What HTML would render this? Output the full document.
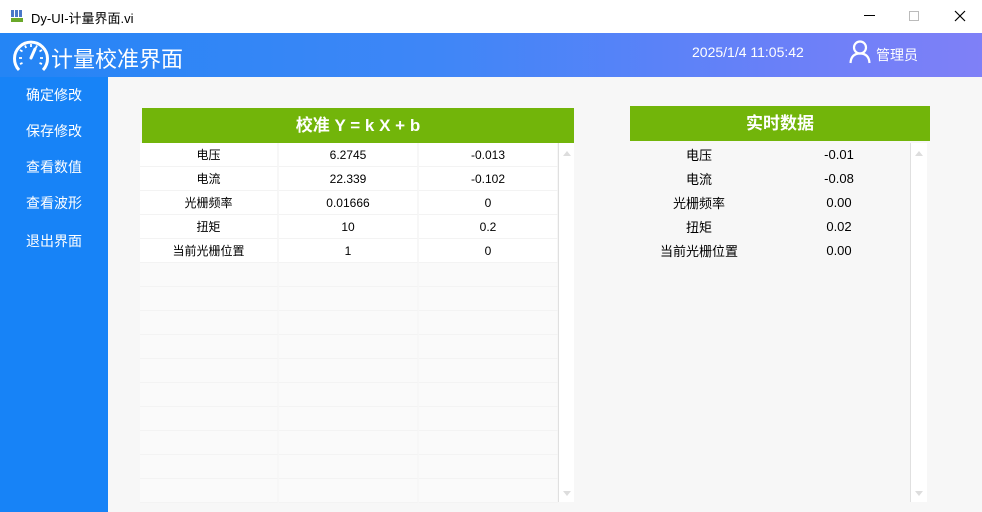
<!DOCTYPE html>
<html><head><meta charset="utf-8"><style>
*{margin:0;padding:0;box-sizing:border-box}
body{width:982px;height:512px;overflow:hidden;background:#f7f7f7;font-family:"Liberation Sans","Noto Sans CJK SC",sans-serif;position:relative}
.a{position:absolute}
.title{left:0;top:0;width:982px;height:33px;background:#fff;font-size:13px;color:#000}
.hdr{left:0;top:33px;width:982px;height:44px;background:linear-gradient(90deg,#2485f5 0%,#3f86f7 45%,#6a80f8 80%,#7f80f7 100%);color:#fff}
.side{left:0;top:77px;width:108px;height:435px;background:#1783f7;color:#fff;font-size:14px}
.side div{position:absolute;left:26px}
.gh{background:#72b50a;color:#fff;font-weight:bold;font-size:17px;text-align:center;line-height:35px}
table{border-collapse:separate;border-spacing:0;position:absolute}
td{height:24px;font-size:12px;text-align:center;color:#000;background:#fff;border-right:2px solid #f7f7f7;border-bottom:1px solid #f3f3f3;padding:0}
tr.e td{background:#fafafa}
.sb{background:#fff;border-left:1px solid #e0e0e0}
.tri{position:absolute;left:4px;width:0;height:0;border-left:4px solid transparent;border-right:4px solid transparent}
.rt td{background:transparent;border:none;font-size:13px}
</style></head><body>
<div class="a title">
 <svg class="a" style="left:11px;top:10px" width="12" height="12"><rect x="0" y="0" width="3" height="7" fill="#4a78c8"/><rect x="4" y="0" width="3" height="7" fill="#4a78c8"/><rect x="8" y="0" width="3" height="7" fill="#4a78c8"/><rect x="0" y="8" width="12" height="4" fill="#6aa82a"/></svg>
 <div class="a" style="left:31px;top:8px">Dy-UI-计量界面.vi</div>
 <div class="a" style="left:864px;top:15px;width:11px;height:1px;background:#000"></div>
 <div class="a" style="left:909px;top:11px;width:10px;height:10px;border:1px solid #bbb"></div>
 <svg class="a" style="left:954px;top:10px" width="12" height="12"><path d="M1 1L11 11M11 1L1 11" stroke="#000" stroke-width="1.2"/></svg>
</div>
<div class="a hdr">
 <svg class="a" style="left:11px;top:3px" width="40" height="40" viewBox="0 0 40 40" fill="none" stroke="#fff"><path d="M8 34 A16.5 16.5 0 1 1 32 34" stroke-width="3"/><path d="M20 22 L24 13" stroke-width="3" stroke-linecap="round"/><g stroke-width="1.8"><path d="M8 22h3M29 22h3M9 14l2.5 1.5M31 14l-2.5 1.5M20 8v3M14 9.5l1.2 2.5M26 9.5l-1.2 2.5M9 28l2.5-1M31 28l-2.5-1"/></g></svg>
 <div class="a" style="left:51px;top:9px;font-size:22px">计量校准界面</div>
 <div class="a" style="left:692px;top:11px;font-size:14px">2025/1/4 11:05:42</div>
 <svg class="a" style="left:849px;top:7px" width="22" height="24" viewBox="0 0 22 24" fill="none" stroke="#fff" stroke-width="2.2"><circle cx="11" cy="7.5" r="6"/><path d="M1.5 23 C2 16 6 13.5 11 13.5 S20 16 20.5 23"/></svg>
 <div class="a" style="left:876px;top:12px;font-size:14px">管理员</div>
</div>
<div class="a side">
 <div style="top:8px">确定修改</div>
 <div style="top:44px">保存修改</div>
 <div style="top:80px">查看数值</div>
 <div style="top:116px">查看波形</div>
 <div style="top:154px">退出界面</div>
</div>
<div class="a gh" style="left:142px;top:108px;width:432px;height:35px">校准 Y = k X + b</div>
<table style="left:140px;top:143px;width:419px">
<colgroup><col style="width:139px"><col style="width:140px"><col style="width:140px"></colgroup>
<tr><td>电压</td><td>6.2745</td><td>-0.013</td></tr>
<tr><td>电流</td><td>22.339</td><td>-0.102</td></tr>
<tr><td>光栅频率</td><td>0.01666</td><td>0</td></tr>
<tr><td>扭矩</td><td>10</td><td>0.2</td></tr>
<tr><td>当前光栅位置</td><td>1</td><td>0</td></tr>
<tr class="e"><td></td><td></td><td></td></tr><tr class="e"><td></td><td></td><td></td></tr><tr class="e"><td></td><td></td><td></td></tr><tr class="e"><td></td><td></td><td></td></tr><tr class="e"><td></td><td></td><td></td></tr><tr class="e"><td></td><td></td><td></td></tr><tr class="e"><td></td><td></td><td></td></tr><tr class="e"><td></td><td></td><td></td></tr><tr class="e"><td></td><td></td><td></td></tr><tr class="e"><td></td><td></td><td></td></tr>
</table>
<div class="a sb" style="left:558px;top:143px;width:16px;height:359px"><div class="tri" style="top:8px;border-bottom:5px solid #ddd"></div><div class="tri" style="bottom:6px;border-top:5px solid #ddd"></div></div>
<div class="a gh" style="left:630px;top:106px;width:300px;height:35px">实时数据</div>
<div class="a" style="left:630px;top:143px;width:281px;height:359px;background:#f7f7f7"></div>
<table class="rt" style="left:630px;top:142px;width:280px">
<colgroup><col style="width:138px"><col style="width:142px"></colgroup>
<tr><td>电压</td><td>-0.01</td></tr>
<tr><td>电流</td><td>-0.08</td></tr>
<tr><td>光栅频率</td><td>0.00</td></tr>
<tr><td>扭矩</td><td>0.02</td></tr>
<tr><td>当前光栅位置</td><td>0.00</td></tr>
</table>
<div class="a sb" style="left:910px;top:143px;width:17px;height:359px"><div class="tri" style="top:8px;border-bottom:5px solid #ddd"></div><div class="tri" style="bottom:6px;border-top:5px solid #ddd"></div></div>
</body></html>
